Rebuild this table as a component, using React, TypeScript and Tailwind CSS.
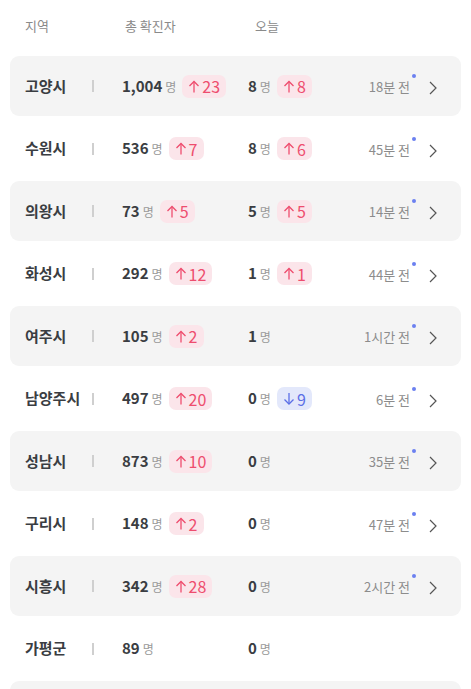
import React from "react";

type Row = {
  name: string;
  total: string;
  totalDiff?: number;
  today: string;
  todayDiff?: number;
  todayDown?: boolean;
  time?: string;
};

const rows: Row[] = [
  { name: "고양시", total: "1,004", totalDiff: 23, today: "8", todayDiff: 8, time: "18분 전" },
  { name: "수원시", total: "536", totalDiff: 7, today: "8", todayDiff: 6, time: "45분 전" },
  { name: "의왕시", total: "73", totalDiff: 5, today: "5", todayDiff: 5, time: "14분 전" },
  { name: "화성시", total: "292", totalDiff: 12, today: "1", todayDiff: 1, time: "44분 전" },
  { name: "여주시", total: "105", totalDiff: 2, today: "1", time: "1시간 전" },
  { name: "남양주시", total: "497", totalDiff: 20, today: "0", todayDiff: 9, todayDown: true, time: "6분 전" },
  { name: "성남시", total: "873", totalDiff: 10, today: "0", time: "35분 전" },
  { name: "구리시", total: "148", totalDiff: 2, today: "0", time: "47분 전" },
  { name: "시흥시", total: "342", totalDiff: 28, today: "0", time: "2시간 전" },
  { name: "가평군", total: "89", today: "0" },
  { name: "", total: "", today: "" },
];

const Badge = ({ n, down }: { n: number; down?: boolean }) => (
  <span
    className={
      "ml-[6px] inline-flex h-[23px] items-center rounded-[7px] px-[6px] text-[16px] " +
      (down ? "bg-[#e3e8fb] text-[#5b6fe6]" : "bg-[#fbe5ea] text-[#ee4d6e]")
    }
  >
    <svg width="12" height="13" viewBox="0 0 12 13" className="mr-[2px]" fill="none" stroke="currentColor" strokeWidth="1.3">
      {down ? (
        <>
          <line x1="6" y1="1" x2="6" y2="12" />
          <polyline points="1.5,7.5 6,12 10.5,7.5" />
        </>
      ) : (
        <>
          <line x1="6" y1="1.5" x2="6" y2="12.5" />
          <polyline points="1.5,6 6,1.5 10.5,6" />
        </>
      )}
    </svg>
    {n}
  </span>
);

const Count = ({ v }: { v: string }) => (
  <span className="flex items-baseline">
    <span className="text-[15px] font-bold text-[#3a3d42]">{v}</span>
    <span className="ml-[3px] text-[12px] text-[#9a9a9a]">명</span>
  </span>
);

export default function App() {
  return (
    <div
      className="h-[689px] w-[471px] overflow-hidden bg-white"
      style={{ fontFamily: '"Noto Sans CJK KR", "Noto Sans", sans-serif' }}
    >
      {/* header */}
      <div className="flex h-[56px] items-center px-[25px] pb-[4px] text-[13px] text-[#8a8a8a]">
        <div className="w-[100px]">지역</div>
        <div className="w-[130px]">총 확진자</div>
        <div>오늘</div>
      </div>

      <div className="flex flex-col">
        {rows.map((r, i) => (
          <div
            key={i}
            className={
              "mx-[10px] mb-[2.5px] flex h-[60px] items-center rounded-[9px] pl-[15px] pr-[23px] " +
              (i % 2 === 0 ? "bg-[#f4f4f4]" : "bg-white")
            }
          >
            {r.name && (
              <>
                <div className="w-[67px] text-[15px] font-bold text-[#3a3d42]">{r.name}</div>
                <div className="w-[30px]">
                  <div className="h-[12px] w-[2px] bg-[#cfcfcf]" />
                </div>
                <div className="flex w-[126px] items-center">
                  <Count v={r.total} />
                  {r.totalDiff !== undefined && <Badge n={r.totalDiff} />}
                </div>
                <div className="flex flex-1 items-center">
                  <Count v={r.today} />
                  {r.todayDiff !== undefined && <Badge n={r.todayDiff} down={r.todayDown} />}
                </div>
                {r.time && (
                  <div className="relative mt-[2px] pr-[4px] text-[13px] text-[#8c8c8c]">
                    {r.time}
                    <span className="absolute right-[-2px] top-[-3px] h-[4px] w-[4px] rounded-full bg-[#6b80f0]" />
                  </div>
                )}
                {r.time && (
                  <svg width="10" height="16" viewBox="0 0 10 16" className="ml-[14px] mt-[4px]" fill="none" stroke="#555" strokeWidth="1.2">
                    <polyline points="2,2 8,8 2,14" />
                  </svg>
                )}
              </>
            )}
          </div>
        ))}
      </div>
    </div>
  );
}
